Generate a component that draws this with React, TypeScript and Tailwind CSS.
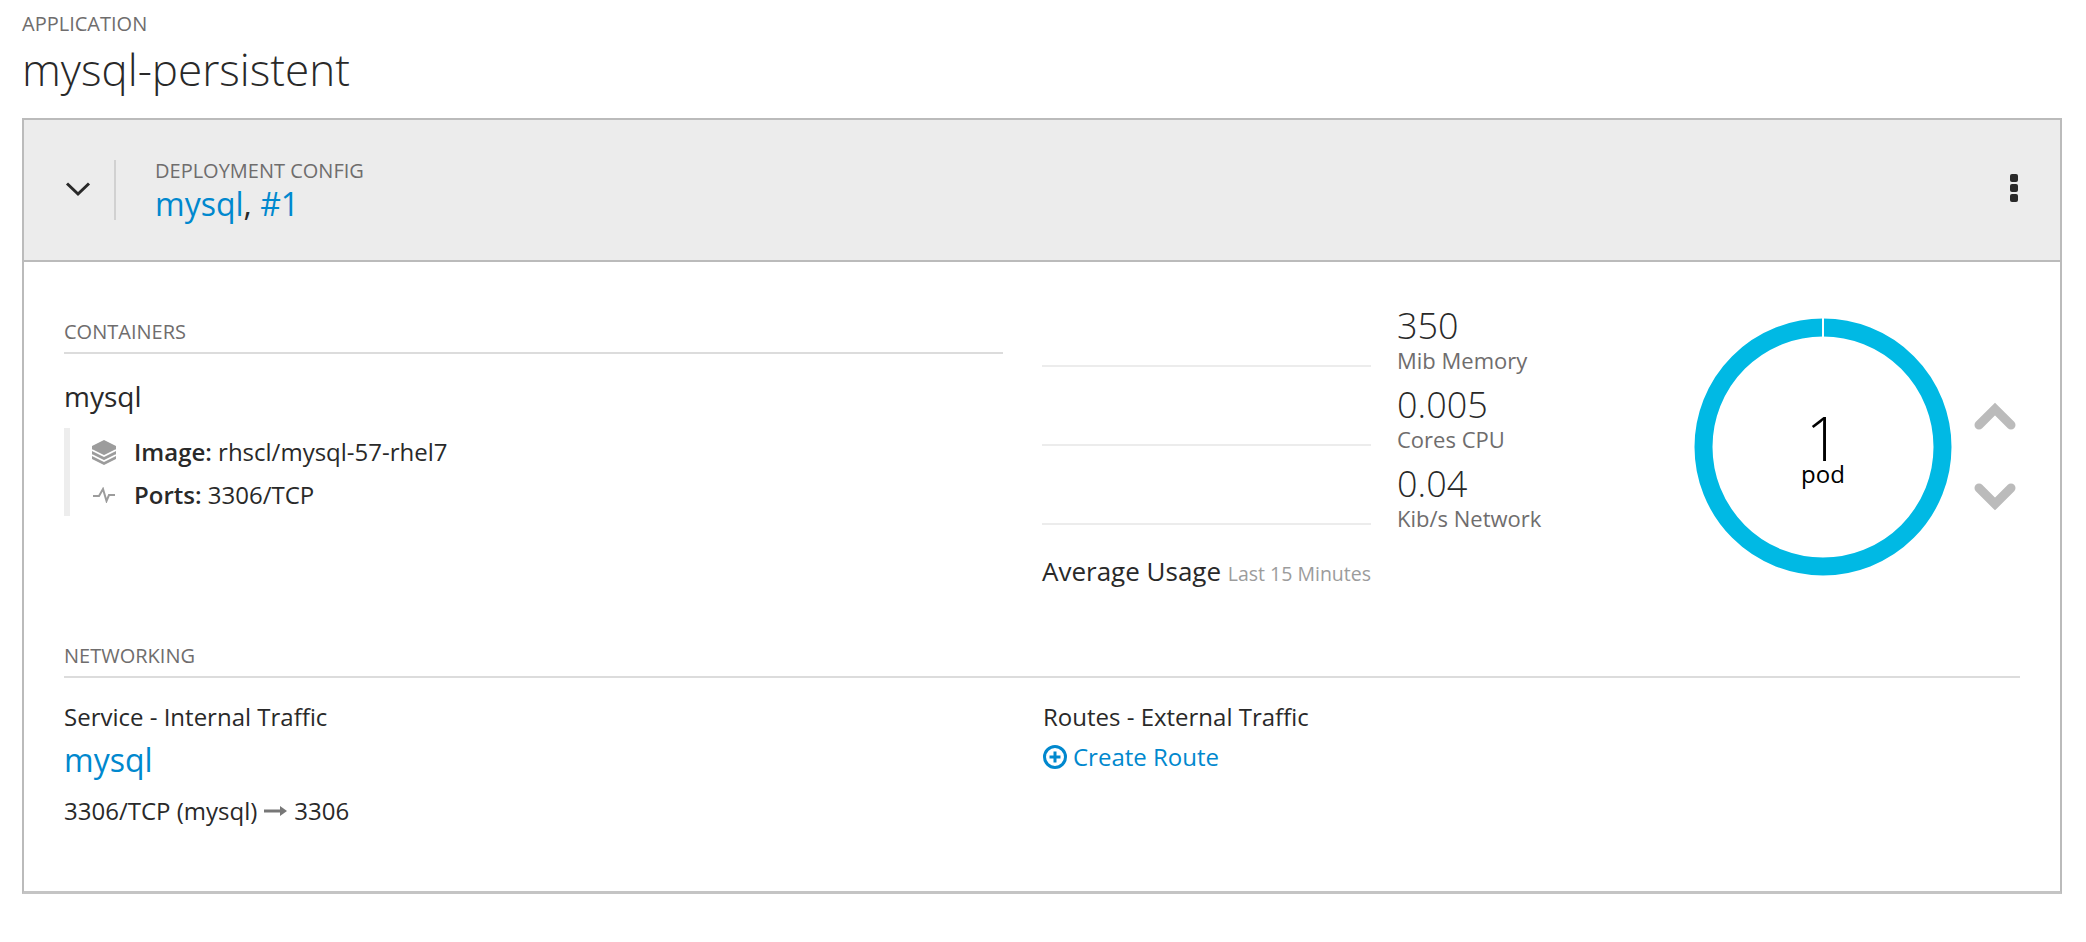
import { ReactNode } from "react";

function SectionTitle({ children }: { children: ReactNode }) {
  return (
    <div className="border-b-2 border-[#dcdcdc] h-[34px] text-[20px] leading-[24px] text-[#6f6d6d] uppercase">
      {children}
    </div>
  );
}

function Metric({ value, label }: { value: string; label: string }) {
  return (
    <div className="flex items-end h-[79px]">
      <div className="w-[329px] h-[2px] bg-[#ececec]" />
      <div className="ml-[26px] w-[200px] -mb-[6px]">
        <div className="text-[36px] font-light leading-[40px] mb-[1px] text-[#292929]">{value}</div>
        <div className="text-[22px] leading-[26px] text-[#6f6d6d] whitespace-nowrap">{label}</div>
      </div>
    </div>
  );
}

function Donut() {
  return (
    <div className="relative w-[258px] h-[258px]">
      <svg width="258" height="258" viewBox="0 0 258 258">
        <circle cx="129" cy="129" r="119.5" fill="none" stroke="#00b9e4" strokeWidth="18" />
        <rect x="128" y="0" width="2" height="19" fill="#fff" />
      </svg>
      <div className="absolute inset-0 flex flex-col items-center justify-center text-black">
        <div className="text-[60px] font-light leading-[60px] mt-[1px]">1</div>
        <div className="text-[24px] leading-[26px] -mt-[7px]">pod</div>
      </div>
    </div>
  );
}

export default function App() {
  return (
    <div className="bg-white min-h-screen px-[22px] pt-[12px] text-[#292929] font-['Open_Sans',sans-serif]">
      <div className="text-[20px] leading-[24px] text-[#6f6d6d] uppercase">Application</div>
      <h1 className="text-[44px] leading-[54px] font-light mt-[6px] mb-[22px]">mysql-persistent</h1>

      <div className="border-2 border-[#bbbbbb] border-b-[3px] border-b-[#c4c4c4] w-[2040px]">
        <div className="h-[142px] bg-[#ececec] border-b-2 border-[#bbbbbb] flex items-center">
          <div className="w-[90px] pl-[41px] -mt-[2px]">
            <svg width="26" height="16" viewBox="0 0 26 16" className="block">
              <path d="M2 2.5 L13 13 L24 2.5" fill="none" stroke="#292929" strokeWidth="3" />
            </svg>
          </div>
          <div className="w-[2px] h-[60px] bg-[#d1d1d1]" />
          <div className="ml-[39px] flex-1 mt-[2px]">
            <div className="text-[20px] leading-[24px] text-[#6f6d6d] uppercase">Deployment Config</div>
            <div className="text-[32px] leading-[40px] mt-[1px]">
              <a className="text-[#0088ce]">mysql</a>, <a className="text-[#0088ce]">#1</a>
            </div>
          </div>
          <div className="flex flex-col gap-[2px] mr-[42px] -mt-[4px]">
            <div className="w-2 h-2 bg-[#292929] rounded-[2px]" />
            <div className="w-2 h-2 bg-[#292929] rounded-[2px]" />
            <div className="w-2 h-2 bg-[#292929] rounded-[2px]" />
          </div>
        </div>

        <div className="px-[40px] pt-[58px] pb-[64px]">
          <div className="flex h-[324px]">
            <div className="w-[939px]">
              <SectionTitle>Containers</SectionTitle>
              <div className="text-[28px] leading-[38px] mt-[23px]">mysql</div>
              <div className="border-l-[6px] border-[#ededed] mt-[13px] pl-[22px] pt-[2px] text-[24px] text-[#292929]">
                <div className="flex items-center h-[44px]">
                  <svg width="24" height="25" viewBox="0 0 24 25" className="mr-[18px]">
                    <path d="M12 0 L24 6 V19 L12 25 L0 19 V6 Z" fill="#9c9c9c" />
                    <path d="M0 10 L12 16 L24 10 M0 15 L12 21 L24 15" fill="none" stroke="#fff" strokeWidth="1.6" />
                  </svg>
                  <span><b className="font-semibold">Image:</b> rhscl/mysql-57-rhel7</span>
                </div>
                <div className="flex items-center h-[42px]">
                  <svg width="24" height="16" viewBox="0 0 24 16" className="mr-[18px]">
                    <path d="M1 9 H7 L11 2 L14.5 14 L17 8 H23" fill="none" stroke="#9c9c9c" strokeWidth="2" />
                  </svg>
                  <span><b className="font-semibold">Ports:</b> 3306/TCP</span>
                </div>
              </div>
            </div>

            <div className="ml-[39px] w-[652px] -mt-[32px]">
              <Metric value="350" label="Mib Memory" />
              <Metric value="0.005" label="Cores CPU" />
              <Metric value="0.04" label="Kib/s Network" />
              <div className="mt-[29px] flex items-baseline w-[329px] justify-between">
                <span className="text-[26px] leading-[34px] whitespace-nowrap">Average Usage</span>
                <span className="text-[19.5px] text-[#9c9c9c] whitespace-nowrap">Last 15 Minutes</span>
              </div>
            </div>

            <div className="-mt-[2px] h-[258px]">
              <Donut />
            </div>

            <div className="ml-[21px] flex flex-col gap-[53px] mt-[82px]">
              <svg width="44" height="28" viewBox="0 0 44 28">
                <path d="M6 23 L22 7 L38 23" fill="none" stroke="#bbbbbb" strokeWidth="9" strokeLinecap="round" />
              </svg>
              <svg width="44" height="28" viewBox="0 0 44 28">
                <path d="M6 5 L22 21 L38 5" fill="none" stroke="#bbbbbb" strokeWidth="9" strokeLinecap="round" />
              </svg>
            </div>
          </div>

          <SectionTitle>Networking</SectionTitle>
          <div className="flex mt-[23px]">
            <div className="w-[979px]">
              <div className="text-[24px] leading-[32px]">Service - Internal Traffic</div>
              <a className="block text-[#0088ce] text-[32px] leading-[42px] mt-[6px]">mysql</a>
              <div className="text-[24px] leading-[32px] mt-[14px] flex items-center">
                3306/TCP (mysql)
                <svg width="23" height="12" viewBox="0 0 23 12" className="mx-[7px]">
                  <path d="M0 6 H17" stroke="#777777" strokeWidth="3" />
                  <path d="M16 1 L23 6 L16 11 Z" fill="#777777" />
                </svg>
                3306
              </div>
            </div>
            <div>
              <div className="text-[24px] leading-[32px]">Routes - External Traffic</div>
              <a className="flex items-center text-[#0088ce] text-[24px] leading-[32px] mt-[8px]">
                <svg width="24" height="24" viewBox="0 0 24 24" className="mr-[6px]">
                  <circle cx="12" cy="12" r="10.5" fill="none" stroke="#0088ce" strokeWidth="3" />
                  <path d="M12 6.5 V17.5 M6.5 12 H17.5" stroke="#0088ce" strokeWidth="3" />
                </svg>
                Create Route
              </a>
            </div>
          </div>
        </div>
      </div>
    </div>
  );
}
